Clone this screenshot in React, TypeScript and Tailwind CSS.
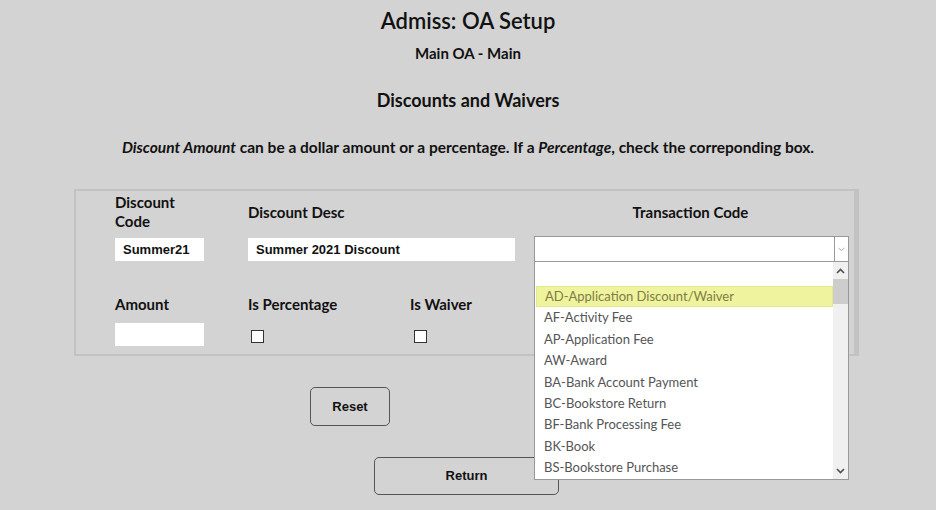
import React from 'react';

const options = [
  'AD-Application Discount/Waiver',
  'AF-Activity Fee',
  'AP-Application Fee',
  'AW-Award',
  'BA-Bank Account Payment',
  'BC-Bookstore Return',
  'BF-Bank Processing Fee',
  'BK-Book',
  'BS-Bookstore Purchase',
];

const label = "font-['Lato',sans-serif] text-[15px] font-bold text-[#111] leading-[19px]";
const field = "bg-white h-[23px] px-2 font-['Liberation_Sans',Arial,sans-serif] text-[13px] font-bold text-[#111] flex items-center";

const Checkbox = () => (
  <div className="w-[13px] h-[13px] border border-[#333] bg-white" />
);

const App = () => {
  return (
    <div className="w-[936px] h-[510px] bg-[#d3d3d3] overflow-hidden font-['Lato',sans-serif] text-[#111]">
      <div className="flex flex-col items-center">
        <h1 className="mt-[8px] text-[22px] font-semibold leading-[26px]">Admiss: OA Setup</h1>
        <div className="mt-[10px] text-[15px] font-bold leading-[18px]">Main OA - Main</div>
        <h2 className="mt-[27px] text-[18px] font-bold leading-[22px]">Discounts and Waivers</h2>
        <p className="mt-[27px] text-[15.5px] font-bold leading-[18px]">
          <i>Discount Amount</i> can be a dollar amount or a percentage. If a <i>Percentage</i>, check the correponding box.
        </p>
      </div>

      <div className="ml-[74px] mt-[33px] w-[785px] h-[167px] border-2 border-r-[5px] border-[#c2c2c2] pl-[39px] pt-[2px]">
        <div className="grid grid-cols-[133px_162px_124px_315px]">
          <div className={label}>Discount<br />Code</div>
          <div className={`${label} self-center`}>Discount Desc</div>
          <div />
          <div className={`${label} self-center text-center pr-[2px]`}>Transaction Code</div>

          <div className="mt-[7px]">
            <div className={`${field} w-[89px]`}>Summer21</div>
          </div>
          <div className="mt-[7px] col-span-2">
            <div className={`${field} w-[267px]`}>Summer 2021 Discount</div>
          </div>
          <div className="mt-[5px] relative">
            <div className="h-[26px] border border-[#999] bg-white flex justify-end">
              <div className="w-[14px] border-l border-[#999] flex items-center justify-center">
                <svg width="7" height="5" viewBox="0 0 7 5">
                  <path d="M0.5 1 L3.5 3.5 L6.5 1" fill="none" stroke="#aaa" strokeWidth="1" />
                </svg>
              </div>
            </div>
            <div className="absolute left-0 top-[25px] w-[315px] h-[219px] border border-[#999] bg-white flex z-10">
              <div className="flex-1 pt-[24px] pl-px">
                {options.map((o, i) => (
                  <div
                    key={o}
                    className={`h-[21.4px] flex items-center pl-[8px] text-[13px] font-['Lato',sans-serif] ${
                      i === 0
                        ? 'bg-[#eff39d] border border-[#e4ea86] text-[#7d7d48] pl-[7px]'
                        : 'text-[#555]'
                    }`}
                  >
                    {o}
                  </div>
                ))}
              </div>
              <div className="w-[15px] bg-[#f0f0f0] flex flex-col">
                <div className="h-[17px] flex items-center justify-center">
                  <svg width="9" height="6" viewBox="0 0 9 6">
                    <path d="M1 5 L4.5 1.5 L8 5" fill="none" stroke="#505050" strokeWidth="1.6" />
                  </svg>
                </div>
                <div className="h-[25px] bg-[#cdcdcd]" />
                <div className="flex-1" />
                <div className="h-[17px] flex items-center justify-center">
                  <svg width="9" height="6" viewBox="0 0 9 6">
                    <path d="M1 1 L4.5 4.5 L8 1" fill="none" stroke="#505050" strokeWidth="1.6" />
                  </svg>
                </div>
              </div>
            </div>
          </div>

          <div className={`${label} mt-[33px]`}>Amount</div>
          <div className={`${label} mt-[33px]`}>Is Percentage</div>
          <div className={`${label} mt-[33px]`}>Is Waiver</div>
          <div />

          <div className="mt-[9px]">
            <div className={`${field} w-[89px]`} />
          </div>
          <div className="mt-[16px] pl-[3px]">
            <Checkbox />
          </div>
          <div className="mt-[16px] pl-[4px]">
            <Checkbox />
          </div>
          <div />
        </div>
      </div>

      <button className="block ml-[310px] mt-[31px] w-[80px] h-[39px] rounded-[5px] border border-[#555] bg-[#d3d3d3] font-['Liberation_Sans',Arial,sans-serif] text-[13px] font-bold text-[#111]">
        Reset
      </button>
      <button className="block ml-[374px] mt-[31px] w-[185px] h-[38px] rounded-[5px] border border-[#555] bg-[#d3d3d3] font-['Liberation_Sans',Arial,sans-serif] text-[13px] font-bold text-[#111]">
        Return
      </button>
    </div>
  );
};

export default App;
